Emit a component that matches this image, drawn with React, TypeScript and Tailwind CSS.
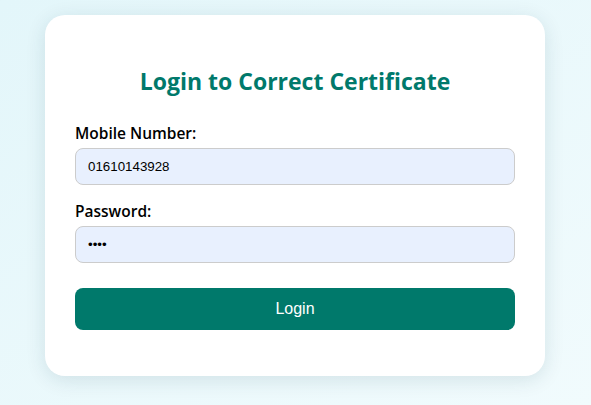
export default function App() {
  return (
    <div className="min-h-[405px] w-full bg-gradient-to-br from-[#e3f6fa] to-[#f1fbfd] flex pl-[45px] pt-[15px] font-['Open_Sans',sans-serif]">
      <div className="w-[500px] h-[361px] bg-white rounded-[20px] shadow-[0_4px_20px_rgba(0,60,70,0.12)] px-[30px] pt-[52px]">
        <h2 className="text-center text-[23px] leading-[29px] font-bold text-[#00796b] mb-[27px]">
          Login to Correct Certificate
        </h2>
        <form className="flex flex-col" onSubmit={(e) => e.preventDefault()}>
          <label className="block text-[15.5px] leading-[20px] font-semibold text-black mb-[5px]">Mobile Number:</label>
          <input
            type="text"
            defaultValue="01610143928"
            className="h-[37px] w-full rounded-[8px] border border-[#ccc] bg-[#e8f0fe] px-[12px] text-[13.33px] text-black font-['Liberation_Sans',Arial,sans-serif] outline-none"
          />
          <label className="block text-[15.5px] leading-[20px] font-semibold text-black mt-[16px] mb-[5px]">Password:</label>
          <input
            type="password"
            defaultValue="1234"
            className="h-[37px] w-full rounded-[8px] border border-[#ccc] bg-[#e8f0fe] px-[12px] text-[13.33px] text-black font-['Liberation_Sans',Arial,sans-serif] outline-none"
          />
          <button
            type="submit"
            className="mt-[25px] h-[42px] w-full rounded-[8px] bg-[#00796b] text-white text-[16px] font-['Liberation_Sans',Arial,sans-serif]"
          >
            Login
          </button>
        </form>
      </div>
    </div>
  );
}
